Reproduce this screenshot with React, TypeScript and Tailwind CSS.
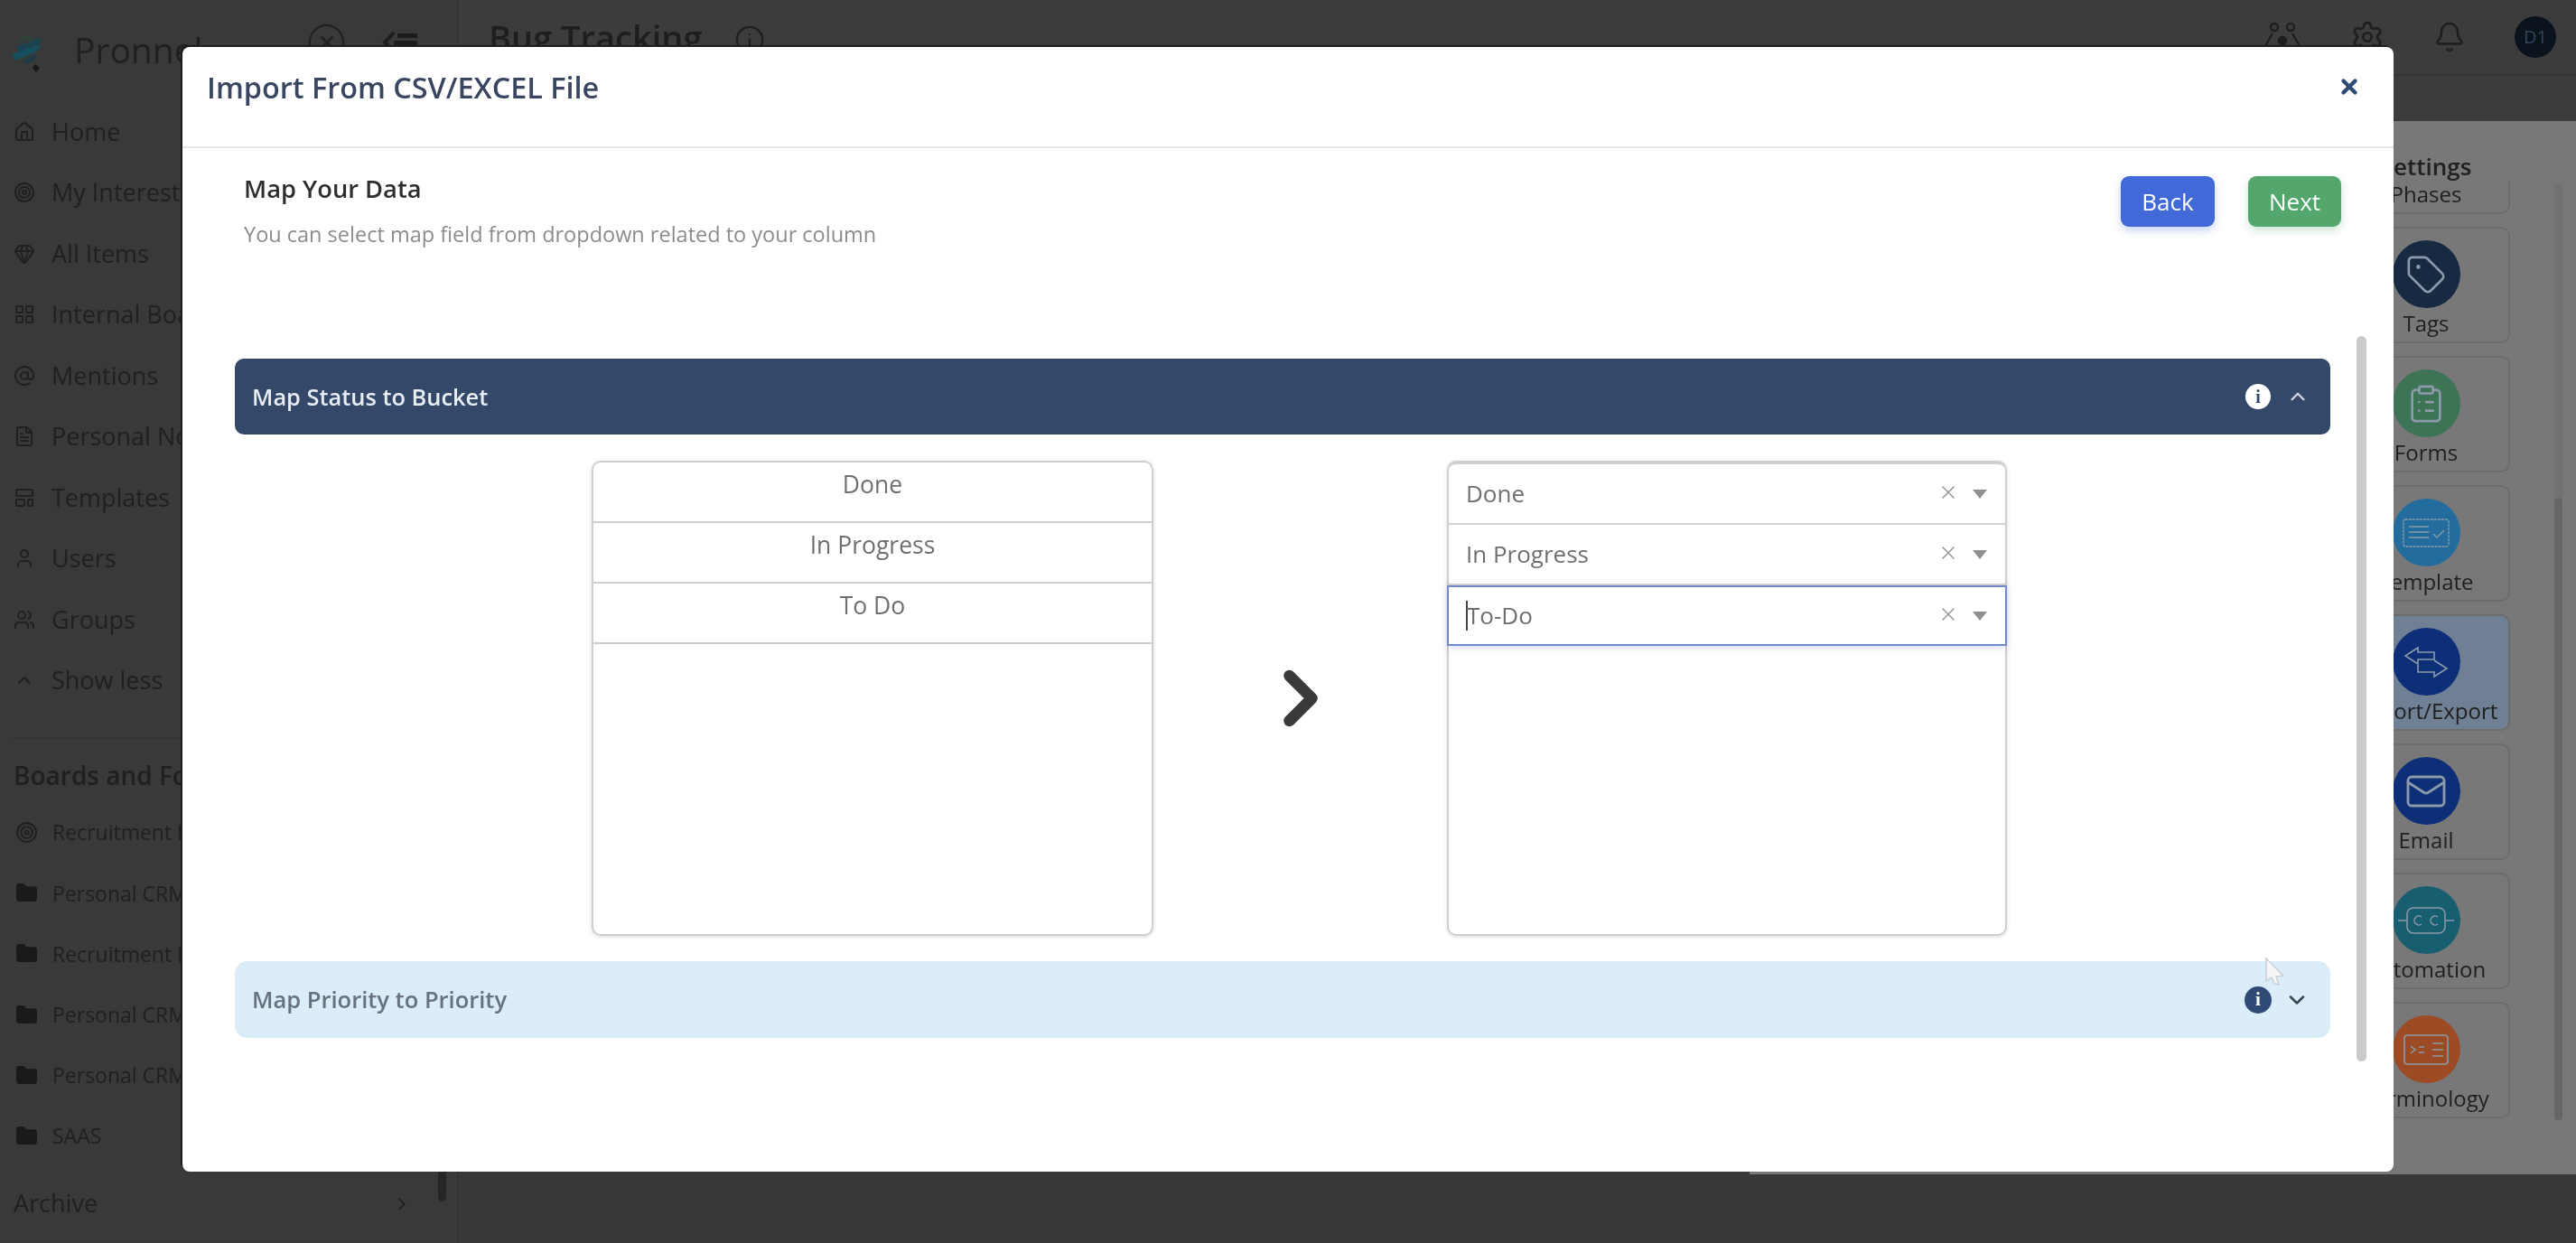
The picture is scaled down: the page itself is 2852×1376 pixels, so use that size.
import { AtSign, Bell, ChevronDown, ChevronRight, ChevronUp, ClipboardList, FileText, Folder, Gem, Home, Info, LayoutGrid, LayoutTemplate, Mail, Settings, Tag, Target, User, Users, X } from "lucide-react";
import type { ReactNode } from "react";

const font = "font-['Open_Sans','Noto_Sans',sans-serif]";

const navItems = [
  { label: "Home", icon: <Home size={24} /> },
  { label: "My Interests", icon: <Target size={24} /> },
  { label: "All Items", icon: <Gem size={24} /> },
  { label: "Internal Boards", icon: <LayoutGrid size={24} /> },
  { label: "Mentions", icon: <AtSign size={24} /> },
  { label: "Personal Notes", icon: <FileText size={24} /> },
  { label: "Templates", icon: <LayoutTemplate size={24} /> },
  { label: "Users", icon: <User size={24} /> },
  { label: "Groups", icon: <Users size={24} /> },
  { label: "Show less", icon: <ChevronUp size={24} /> },
];

const boards = [
  { label: "Recruitment Board", target: true },
  { label: "Personal CRM Folder" },
  { label: "Recruitment Folder" },
  { label: "Personal CRM 2" },
  { label: "Personal CRM 3" },
  { label: "SAAS" },
];

function Logo() {
  return (
    <svg width="34" height="44" viewBox="0 0 34 44" className="shrink-0">
      <path d="M8 12 C8 2 24 0 25 11 L20 13 C20 6 13 6 13 11Z" fill="#2f4238" />
      <path d="M6 16 L32 6 L33 12 L8 22Z" fill="#1a4350" />
      <path d="M1 24 L33 13 L29 21 L5 31Z" fill="#16505c" />
      <path d="M13 31 L29 24 L26 31 L17 35Z" fill="#1d3a48" />
      <path d="M27 35 L32 39 L28 44 L24 39Z" fill="#15181c" />
    </svg>
  );
}

function Sidebar() {
  return (
    <aside className="relative flex w-[508px] shrink-0 flex-col border-r-2 border-[#333333] bg-[#393939] text-[#202020]">
      <div className="flex h-[82px] items-start pl-[12px] pt-[36px]">
        <Logo />
        <span className="-mt-[5px] ml-[36px] text-[39px] leading-[48px]">Pronnel</span>
        <span className="-mt-[9px] ml-[118px] flex h-[39px] w-[39px] items-center justify-center rounded-full border-2 border-[#202020]">
          <X size={22} strokeWidth={3} />
        </span>
        <svg width="44" height="30" viewBox="0 0 44 30" className="-mt-[4px] ml-[41px]">
          <path d="M14 4 L4 15 L14 26" fill="none" stroke="#1c1c1c" strokeWidth="4" />
          <rect x="18" y="5" width="22" height="5" fill="#1c1c1c" />
          <rect x="14" y="13" width="26" height="5" fill="#1c1c1c" />
          <rect x="18" y="21" width="22" height="5" fill="#1c1c1c" />
        </svg>
      </div>
      <nav className="flex flex-col pl-[14px] pt-[32px]">
        {navItems.map((item) => (
          <div key={item.label} className="flex h-[67.5px] items-center gap-[17px] whitespace-nowrap text-[27px]">
            <span className="flex w-[26px] justify-center">{item.icon}</span>
            {item.label}
          </div>
        ))}
      </nav>
      <div className="mx-[14px] mt-[29px] border-t border-[#333333]" />
      <div className="pl-[15px] pt-[23px] text-[28px] font-semibold leading-[36px]">Boards and Folders</div>
      <div className="flex flex-col pl-[17px] pt-[12px]">
        {boards.map((b) => (
          <div key={b.label} className="flex h-[67.2px] items-center gap-[16px] whitespace-nowrap text-[23px]">
            {b.target ? <Target size={25} /> : <Folder size={25} fill="#1a1a1a" stroke="#1a1a1a" />}
            {b.label}
          </div>
        ))}
      </div>
      <div className="mt-auto flex h-[92px] items-center justify-between pb-[2px] pl-[15px] pr-[50px] text-[27px]">
        Archive
        <ChevronRight size={22} />
      </div>
      <div className="absolute right-[12px] top-[700px] h-[630px] w-[9px] rounded-full bg-[#262626]" />
    </aside>
  );
}

function TeamIcon() {
  return (
    <svg width="42" height="36" viewBox="0 0 42 36" fill="none" stroke="currentColor" strokeWidth="2.4">
      <circle cx="12" cy="7" r="4" />
      <circle cx="30" cy="7" r="4" />
      <path d="M2 28 L10 14 M40 28 L32 14" />
      <circle cx="21" cy="22" r="4" fill="currentColor" />
      <path d="M14 34 C15 27 27 27 28 34" fill="currentColor" />
    </svg>
  );
}

function TopBar() {
  return (
    <header className="flex h-[82px] shrink-0 items-center bg-[#3c3c3c] pl-[33px] pr-[22px] text-[#1e1e1e]">
      <span className="text-[38px] font-semibold leading-[48px]">Bug Tracking</span>
      <Info size={34} strokeWidth={1.6} className="ml-[36px] mt-[5px]" />
      <div className="ml-auto flex items-center gap-[54px]">
        <TeamIcon />
        <Settings size={38} strokeWidth={1.7} />
        <Bell size={36} strokeWidth={1.7} />
        <span className="flex h-[46px] w-[46px] items-center justify-center rounded-full bg-[#0a121c] text-[20px] text-[#36455a]">D1</span>
      </div>
    </header>
  );
}

function Circle({ color, children }: { color: string; children: ReactNode }) {
  return (
    <span className="flex h-[75px] w-[75px] items-center justify-center rounded-full text-[#8c9aa9]" style={{ backgroundColor: color }}>
      {children}
    </span>
  );
}

const tools = [
  { label: "Tags", color: "#182a42", icon: <Tag size={46} strokeWidth={1.4} /> },
  { label: "Forms", color: "#3d7455", icon: <ClipboardList size={46} strokeWidth={1.4} /> },
  {
    label: "Template",
    color: "#226c9e",
    icon: (
      <svg width="52" height="32" viewBox="0 0 52 32" fill="none" stroke="currentColor" strokeWidth="1.4">
        <rect x="1" y="1" width="50" height="30" rx="2" strokeDasharray="3 1" />
        <path d="M7 9h22M7 15h22M7 21h22M34 17l4 4 8-8" />
      </svg>
    ),
  },
  {
    label: "Import/Export",
    color: "#0d2f78",
    icon: (
      <svg width="50" height="36" viewBox="0 0 50 36" fill="none" stroke="currentColor" strokeWidth="1.6">
        <path d="M16 2 L2 11 L16 20 V15 H34 V7 H16Z" />
        <path d="M34 16 L48 25 L34 34 V29 H16 V21" />
      </svg>
    ),
  },
  { label: "Email", color: "#0d2f78", icon: <Mail size={48} strokeWidth={1.4} /> },
  {
    label: "Automation",
    color: "#185e71",
    icon: (
      <svg width="62" height="34" viewBox="0 0 62 34" fill="none" stroke="currentColor" strokeWidth="1.5">
        <rect x="10" y="3" width="42" height="28" rx="7" />
        <path d="M0 17h10M52 17h10" />
        <path d="M26 13a5 5 0 1 0 0 8M44 13a5 5 0 1 0 0 8" />
      </svg>
    ),
  },
  {
    label: "Terminology",
    color: "#9c4b24",
    icon: (
      <svg width="50" height="34" viewBox="0 0 50 34" fill="none" stroke="currentColor" strokeWidth="1.6">
        <rect x="1" y="1" width="48" height="32" rx="3" />
        <path d="M8 13l5 4-5 4M17 14h6M17 20h6M32 10h12M32 17h12M32 24h12" />
      </svg>
    ),
  },
];

function SettingsPanel() {
  return (
    <div className="relative ml-auto flex w-[915px] flex-col bg-[#787878] pl-[656px] pt-[33px] text-[#202020]">
      <div className="w-[186px] text-center text-[26px] font-semibold leading-[34px]">Settings</div>
      <div className="flex flex-col gap-[14px]">
        <div className="h-[36px] w-[186px] rounded-b-[10px] border-x-2 border-b-2 border-[#6c6c6c] text-center text-[24px] leading-[28px]">Phases</div>
        {tools.map((t) => (
          <div
            key={t.label}
            className={`flex h-[129px] w-[186px] flex-col items-center rounded-[10px] border-2 border-[#6c6c6c] pt-[13px] ${t.label === "Import/Export" ? "bg-[#6f8094]" : ""}`}
          >
            <Circle color={t.color}>{t.icon}</Circle>
            <span className="mt-[3px] whitespace-nowrap text-[24px] leading-[28px]">{t.label}</span>
          </div>
        ))}
      </div>
      <div className="absolute bottom-[60px] right-[15px] top-[69px] w-[9px] bg-[#727272]" />
      <div className="absolute bottom-[60px] right-[15px] top-[417px] w-[9px] rounded-full bg-[#666666]" />
    </div>
  );
}

function Caret() {
  return (
    <svg width="16" height="10" viewBox="0 0 16 10">
      <polygon points="0,0 16,0 8,10" fill="#8f8f8f" />
    </svg>
  );
}

function SourceList({ rows }: { rows: string[] }) {
  return (
    <div className="h-[526px] w-[622px] shrink-0 rounded-[10px] border-2 border-[#cfcfcf] shadow-[0_1px_4px_rgba(0,0,0,0.15)]">
      {rows.map((r) => (
        <div key={r} className="h-[67px] border-b-2 border-[#cfcfcf] pt-[6px] text-center text-[26.5px] leading-[36px] text-[#6f6f6f]">
          {r}
        </div>
      ))}
    </div>
  );
}

function TargetRow({ value, focused }: { value: string; focused?: boolean }) {
  return (
    <div
      className={`flex h-[67px] items-center pl-[19px] pr-[20px] text-[26px] text-[#6f6f6f] ${
        focused ? "-mx-[2px] border-2 border-[#6f89cb] shadow-[0_2px_8px_rgba(120,150,220,0.3)]" : "border-b-2 border-[#d4d4d4]"
      }`}
    >
      {focused && <span className="-mr-[1px] h-[33px] w-[2px] bg-[#444444]" />}
      {value}
      <X size={24} strokeWidth={1.6} className="ml-auto -translate-y-[2px] text-[#9a9a9a]" />
      <span className="ml-[15px]">
        <Caret />
      </span>
    </div>
  );
}

function TargetList() {
  return (
    <div className="h-[526px] w-[620px] shrink-0 rounded-[10px] border-2 border-t-4 border-[#cfcfcf] shadow-[0_1px_4px_rgba(0,0,0,0.15)]">
      <TargetRow value="Done" />
      <TargetRow value="In Progress" />
      <TargetRow value="To-Do" focused />
    </div>
  );
}

function ImportModal() {
  return (
    <div className={`fixed left-[202px] top-[52px] flex h-[1245px] w-[2448px] flex-col rounded-[8px] bg-white shadow-[-2px_-2px_0_#1c1c1c] ${font}`}>
      <div className="flex h-[112px] shrink-0 items-center justify-between border-b-2 border-[#e2e4e8] pl-[27px] pr-[36px]">
        <span className="pb-[22px] text-[32.4px] font-semibold leading-[40px] text-[#3a4661]">Import From CSV/EXCEL File</span>
        <X size={26} strokeWidth={4} className="mb-[22px] text-[#2f4a75]" />
      </div>
      <div className="relative flex-1 pl-[58px] pr-[70px]">
        <div className="flex items-start justify-between pl-[10px] pt-[28px]">
          <div>
            <div className="text-[27.3px] font-semibold leading-[34px] text-[#2e2e2e]">Map Your Data</div>
            <div className="mt-[17px] text-[23.5px] leading-[32px] text-[#8c8c8c]">
              You can select map field from dropdown related to your column
            </div>
          </div>
          <div className="-mr-[12px] mt-[3px] flex gap-[37px]">
            <button className="flex h-[56px] w-[104px] items-center justify-center rounded-[9px] bg-[#4169d8] text-[26px] text-white shadow-[0_4px_10px_rgba(65,105,216,0.3)]">
              Back
            </button>
            <button className="flex h-[56px] w-[103px] items-center justify-center rounded-[9px] bg-[#53a76d] text-[26px] text-white shadow-[0_4px_10px_rgba(83,167,109,0.3)]">
              Next
            </button>
          </div>
        </div>

        <div className="mt-[122px] flex h-[84px] items-center rounded-[10px] bg-[#34486a] pl-[19px] pr-[23px] text-[25.4px] font-semibold text-[#e9edf4]">
          Map Status to Bucket
          <span className="ml-auto flex h-[28px] w-[28px] items-center justify-center rounded-full bg-white font-['Liberation_Serif',serif] text-[20px] font-bold leading-none text-[#34486a]">
            i
          </span>
          <ChevronUp size={26} strokeWidth={2} className="ml-[17px] text-[#d5dbe6]" />
        </div>

        <div className="flex pb-[28px] pl-[395px] pt-[29px]">
          <SourceList rows={["Done", "In Progress", "To Do"]} />
          <div className="flex w-[325px] shrink-0 items-center justify-center">
            <ChevronRight size={100} strokeWidth={3} className="text-[#3a3a3a]" />
          </div>
          <TargetList />
        </div>

        <div className="flex h-[85px] items-center rounded-[14px] bg-[#dcedfa] pl-[19px] pr-[23px] text-[25.5px] font-semibold text-[#67717f]">
          Map Priority to Priority
          <span className="ml-auto flex h-[30px] w-[30px] items-center justify-center rounded-full bg-[#2f4a75] font-['Liberation_Serif',serif] text-[21px] font-bold leading-none text-white">
            i
          </span>
          <ChevronDown size={28} strokeWidth={2.2} className="ml-[14px] text-[#3c4653]" />
        </div>

        <div className="absolute left-[2407px] top-[208px] h-[803px] w-[11px] rounded-full bg-[#cbcbcb]" />
        <svg width="24" height="32" viewBox="0 0 24 32" className="absolute left-[2305px] top-[896px]">
          <path d="M2 1 L21 20 L13 21 L16 30 L11 29 L8 22 L2 26Z" fill="#f4f6f8" stroke="#c8ccd0" strokeWidth="1.4" />
        </svg>
      </div>
    </div>
  );
}

export default function App() {
  return (
    <div className={`flex h-screen w-screen overflow-hidden bg-[#383838] blur-[0.7px] ${font}`}>
      <Sidebar />
      <main className="flex min-w-0 flex-1 flex-col">
        <TopBar />
        <div className="h-[52px] shrink-0 border-t-2 border-[#353535] bg-[#3c3c3c]" />
        <div className="flex h-[1166px] shrink-0">
          <SettingsPanel />
        </div>
      </main>
      <ImportModal />
    </div>
  );
}
